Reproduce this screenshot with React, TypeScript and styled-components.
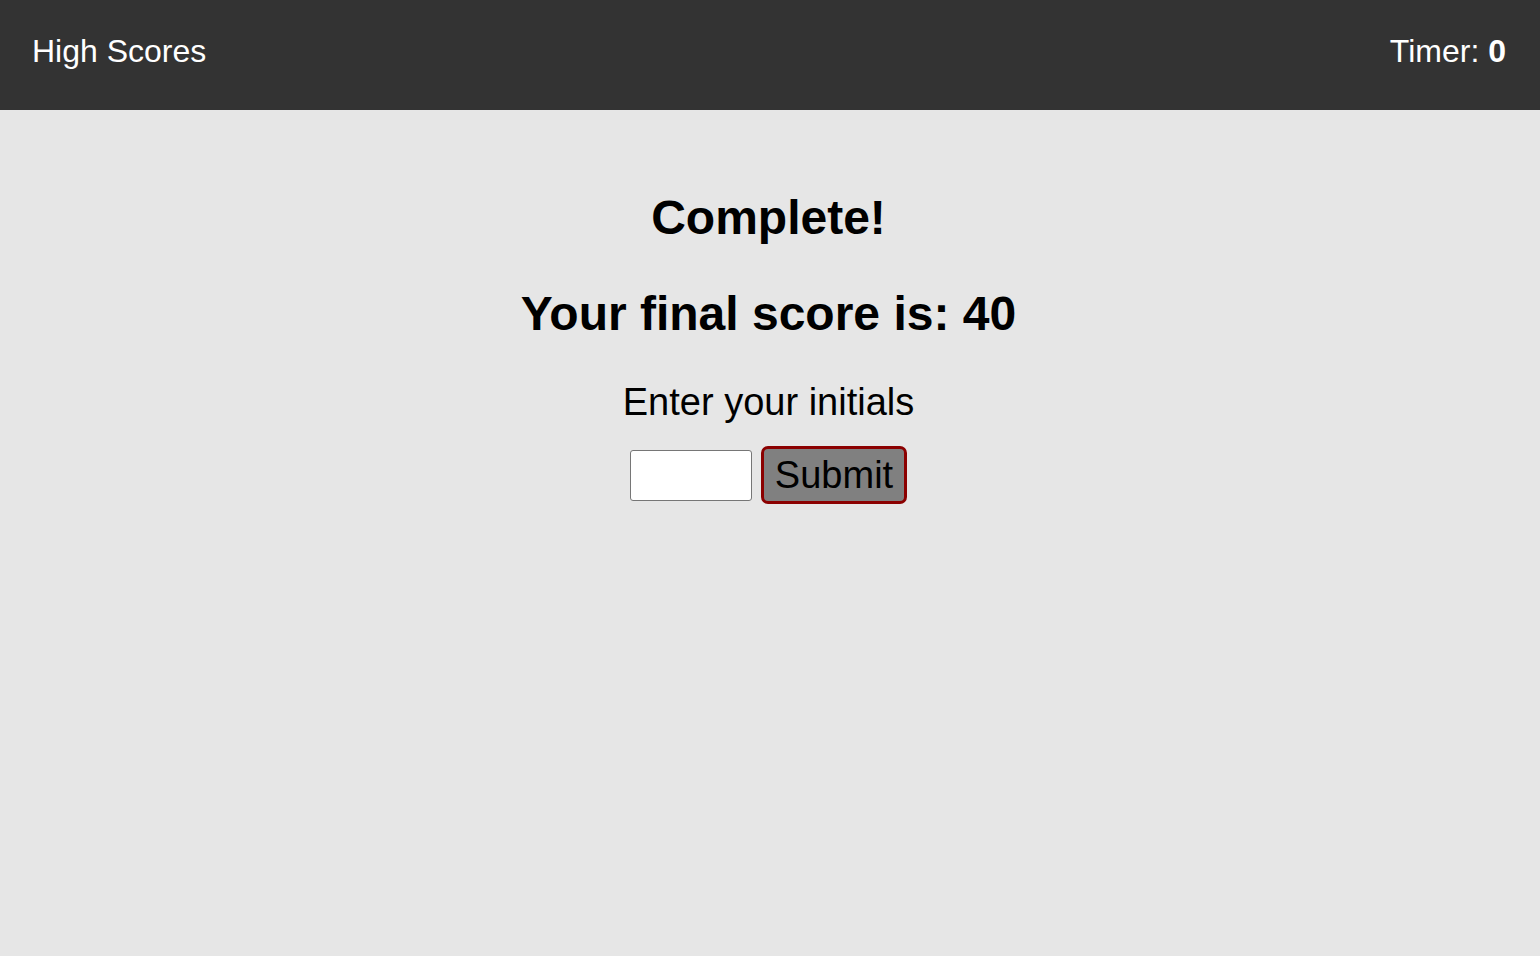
import React from "react";
import styled, { createGlobalStyle } from "styled-components";

const Global = createGlobalStyle`
  html, body {
    margin: 0;
    padding: 0;
    background: #e6e6e6;
    font-family: "Liberation Sans", Arial, sans-serif;
    color: #000;
  }
  #root {
    min-height: 956px;
    background: #e6e6e6;
  }
`;

const Header = styled.header`
  height: 110px;
  box-sizing: border-box;
  background: #333333;
  color: #ffffff;
  display: flex;
  justify-content: space-between;
  align-items: flex-start;
  padding: 33px 34px 0 32px;
  font-size: 32px;
`;

const HeaderItem = styled.div`
  line-height: normal;
`;

const Main = styled.main`
  display: flex;
  flex-direction: column;
  align-items: center;
  text-align: center;
  padding: 80px 3px 0 0;
`;

const Title = styled.h1<{ $gap: number }>`
  margin: 0 0 ${(p) => p.$gap}px;
  font-size: 48px;
  font-weight: bold;
  line-height: normal;
`;

const Label = styled.p`
  margin: 0 0 22px;
  font-size: 38px;
  line-height: normal;
`;

const Form = styled.form`
  display: flex;
  align-items: center;
  gap: 9px;
`;

const Input = styled.input`
  width: 122px;
  height: 51px;
  box-sizing: border-box;
  border: 1px solid #767676;
  border-radius: 3px;
  background: #ffffff;
  padding: 2px 6px;
  font-size: 24px;
  font-family: "Liberation Sans", Arial, sans-serif;
`;

const SubmitButton = styled.button`
  width: 146px;
  height: 58px;
  box-sizing: border-box;
  border: 3px solid #8b0000;
  border-radius: 7px;
  background: #808080;
  color: #000;
  font-size: 38px;
  font-family: "Liberation Sans", Arial, sans-serif;
  padding: 0;
  line-height: 1;
  cursor: pointer;
`;

export default function App() {
  return (
    <>
      <Global />
      <Header>
        <HeaderItem>High Scores</HeaderItem>
        <HeaderItem>
          Timer: <b>0</b>
        </HeaderItem>
      </Header>
      <Main>
        <Title $gap={41}>Complete!</Title>
        <Title $gap={40}>Your final score is: 40</Title>
        <Label>Enter your initials</Label>
        <Form onSubmit={(e) => e.preventDefault()}>
          <Input type="text" />
          <SubmitButton type="submit">Submit</SubmitButton>
        </Form>
      </Main>
    </>
  );
}
